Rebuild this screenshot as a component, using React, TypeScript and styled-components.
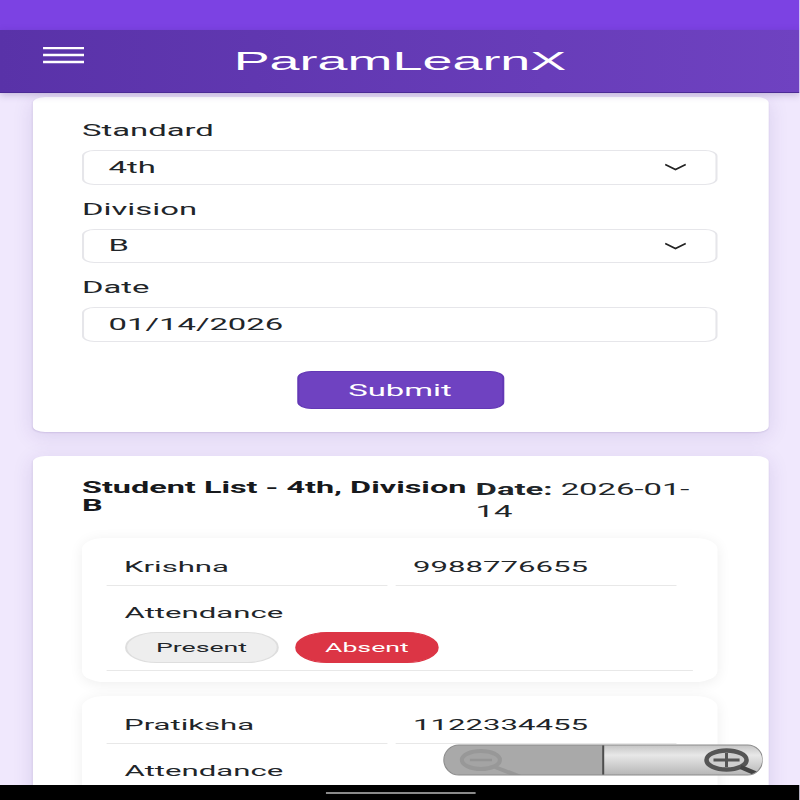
import React from "react";
import styled, { createGlobalStyle } from "styled-components";

const Global = createGlobalStyle`
  html, body { margin: 0; padding: 0; width: 800px; height: 800px; overflow: hidden; background: #f0e8fd; }
  * { box-sizing: border-box; }
`;

const Stage = styled.div`
  position: relative;
  width: 390.24px;
  height: 800px;
  overflow: hidden;
  transform: scaleX(2.05);
  transform-origin: left top;
  background: #f0e8fd;
  font-family: Roboto, "Liberation Sans", sans-serif;
  font-size: 15.2px;
  color: #212529;
`;
const StatusBar = styled.div`
  height: 30px;
  background: #7c42e3;
`;
const Header = styled.header`
  position: relative;
  z-index: 1;
  height: 63px;
  display: flex;
  align-items: center;
  justify-content: center;
  background: linear-gradient(90deg, #5932a8, #6f42c1);
  border-bottom: 1px solid #4b2a96;
  box-shadow: 0 2px 5px rgba(60, 30, 120, 0.25);
`;
const MenuButton = styled.svg`
  position: absolute;
  left: 21.2px;
  top: 17px;
  width: 20px;
  height: 17px;
`;
const Title = styled.h1`
  margin: 0;
  font-family: "Liberation Sans", Arial, sans-serif;
  font-size: 26.3px;
  line-height: 32px;
  font-weight: 400;
  color: #fff;
`;
const Main = styled.main`
  padding: 4px 15.6px 0;
`;
const Card = styled.section`
  background: #fff;
  border-radius: 6px;
  padding: 23px 24.4px;
  box-shadow: 0 1px 1px rgba(70, 40, 130, 0.12), 0 4px 14px rgba(70, 40, 130, 0.13);
  & + & { margin-top: 24px; padding-bottom: 0; }
`;
const Label = styled.label`
  display: block;
  height: 20px;
  line-height: 22px;
  margin-bottom: 10px;
  font-size: 16px;
`;
const Control = styled.div`
  display: flex;
  align-items: center;
  justify-content: space-between;
  height: 34.5px;
  margin-bottom: 14px;
  padding: 0 12px;
  background: #fff;
  border: 1px solid #e6e6ea;
  border-radius: 6px;
  font-size: 16px;
`;
const Chevron = styled.svg`
  width: 11px;
  height: 8px;
  margin-right: 2.5px;
`;
const SubmitRow = styled.div`
  display: flex;
  justify-content: center;
  margin-top: 29.5px;
`;
const Submit = styled.button`
  width: 101px;
  height: 38px;
  border: 1px solid #6338b5;
  border-radius: 7px;
  background: #6f42c1;
  color: #fff;
  font: 400 16px Roboto, sans-serif;
  padding: 0;
`;
const ListHead = styled.div`
  display: grid;
  grid-template-columns: 192px 1fr;
  margin-bottom: 15px;
`;
const ListTitle = styled.h2`
  margin: 0;
  font-size: 15.8px;
  line-height: 18px;
  font-weight: 700;
  color: #17191c;
`;
const DateText = styled.div`
  font-size: 16px;
  line-height: 22px;
  padding-right: 10px;
  b { font-weight: 700; }
`;
const Student = styled.article`
  background: #fff;
  border-radius: 11px;
  padding: 10px 12px 11px;
  margin-bottom: 14px;
  box-shadow: 0 2px 10px rgba(0, 0, 0, 0.07);
`;
const Cells = styled.div`
  display: grid;
  grid-template-columns: 137px 137.5px;
  column-gap: 4px;
`;
const Cell = styled.div`
  padding: 8.5px 8.5px 8.5px;
  line-height: 20px;
  border-bottom: 1px solid #e8e8e8;
`;
const AttendanceRow = styled.div`
  padding: 16.5px 9px 7px 8.8px;
  border-bottom: 1px solid #e8e8e8;
`;
const AttendanceLabel = styled.div`
  line-height: 20px;
  margin-bottom: 9.5px;
`;
const Pills = styled.div`
  display: flex;
  gap: 8.2px;
`;
const Pill = styled.span<{ $danger?: boolean }>`
  display: flex;
  align-items: center;
  justify-content: center;
  height: 31px;
  width: ${(p) => (p.$danger ? "70px" : "75px")};
  border-radius: 16px;
  font-size: 13px;
  background: ${(p) => (p.$danger ? "#dc3545" : "#eeeeee")};
  border: 1px solid ${(p) => (p.$danger ? "#dc3545" : "#dedede")};
  color: ${(p) => (p.$danger ? "#fff" : "#212529")};
`;
const ZoomControl = styled.svg`
  position: absolute;
  left: 215.6px;
  top: 744px;
  width: 156.5px;
  height: 32px;
`;
const NavBar = styled.div`
  position: absolute;
  left: 0;
  right: 0;
  bottom: 0;
  height: 15px;
  background: #000;
  display: flex;
  align-items: center;
  justify-content: center;
`;
const GestureBar = styled.div`
  width: 73px;
  height: 2px;
  margin-top: 1px;
  background: #8a8a8a;
`;

const Arrow = () => (
  <Chevron viewBox="0 0 22 8" preserveAspectRatio="none">
    <path d="M1 1.5 L11 6.5 L21 1.5" fill="none" stroke="#222" strokeWidth="1.6" />
  </Chevron>
);

const StudentCard = ({ name, phone, pills }: { name: string; phone: string; pills?: boolean }) => (
  <Student>
    <Cells>
      <Cell>{name}</Cell>
      <Cell>{phone}</Cell>
    </Cells>
    <AttendanceRow>
      <AttendanceLabel>Attendance</AttendanceLabel>
      {pills && (
        <Pills>
          <Pill>Present</Pill>
          <Pill $danger>Absent</Pill>
        </Pills>
      )}
    </AttendanceRow>
  </Student>
);

export default function App() {
  return (
    <>
      <Global />
      <Stage>
        <StatusBar />
        <Header>
          <MenuButton viewBox="0 0 41 17" preserveAspectRatio="none">
            <path d="M0 1 H41 M0 8 H41 M0 15 H41" stroke="#fff" strokeWidth="2.6" />
          </MenuButton>
          <Title>ParamLearnX</Title>
        </Header>
        <Main>
          <Card>
            <Label>Standard</Label>
            <Control>4th<Arrow /></Control>
            <Label>Division</Label>
            <Control>B<Arrow /></Control>
            <Label>Date</Label>
            <Control>01/14/2026</Control>
            <SubmitRow>
              <Submit>Submit</Submit>
            </SubmitRow>
          </Card>
          <Card>
            <ListHead>
              <ListTitle>Student List - 4th, Division B</ListTitle>
              <DateText><b>Date:</b> 2026-01-<wbr />14</DateText>
            </ListHead>
            <StudentCard name="Krishna" phone="9988776655" pills />
            <StudentCard name="Pratiksha" phone="1122334455" />
          </Card>
        </Main>
        <ZoomControl viewBox="0 0 320 32" preserveAspectRatio="none">
          <defs>
            <linearGradient id="zoomRight" x1="0" y1="0" x2="0" y2="1">
              <stop offset="0" stopColor="#c0c0c0" />
              <stop offset="0.35" stopColor="#e8e8e8" />
              <stop offset="1" stopColor="#b4b4b4" />
            </linearGradient>
            <clipPath id="zoomClip">
              <rect x="1" y="1" width="318" height="30" rx="15" />
            </clipPath>
          </defs>
          <g clipPath="url(#zoomClip)">
            <rect x="0" y="0" width="160" height="32" fill="#a9a9a9" />
            <rect x="160" y="0" width="160" height="32" fill="url(#zoomRight)" />
            <ellipse cx="38" cy="16" rx="19" ry="9" fill="#a4a4a4" stroke="#989898" strokeWidth="4" />
            <path d="M27 16 H49" stroke="#959595" strokeWidth="2.6" />
            <path d="M52 23 L78 33" stroke="#989898" strokeWidth="4" />
            <ellipse cx="283" cy="16" rx="20" ry="9.5" fill="#cfcfcf" stroke="#555" strokeWidth="4.5" />
            <path d="M270 16 H296 M283 9 V23" stroke="#555" strokeWidth="3" />
            <path d="M297 23 L316 31" stroke="#444" strokeWidth="4.5" />
            <path d="M160 0 V32" stroke="#4e4e4e" strokeWidth="2" />
          </g>
          <rect x="1" y="1" width="318" height="30" rx="15" fill="none" stroke="#8c8c8c" />
        </ZoomControl>
        <NavBar>
          <GestureBar />
        </NavBar>
      </Stage>
    </>
  );
}
